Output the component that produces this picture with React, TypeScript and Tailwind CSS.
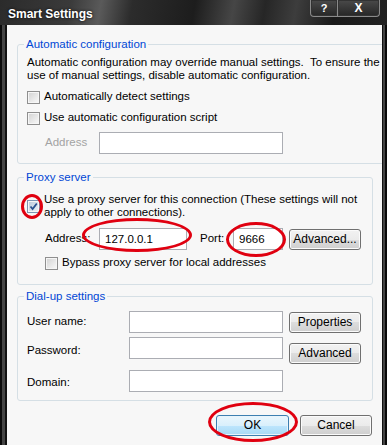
const Checkbox = ({ checked = false }: { checked?: boolean }) => (
  <span
    className={`flex h-[13px] w-[13px] shrink-0 items-center justify-center border shadow-[inset_0_0_0_1px_#f6f6f6] ${
      checked
        ? "border-[#7d93b3] bg-[linear-gradient(135deg,#b9c8db,#eef3f9)]"
        : "border-[#8f8f8f] bg-[linear-gradient(135deg,#d2d2d2,#fafafa)]"
    }`}
  >
    {checked && (
      <svg width="9" height="9" viewBox="0 0 9 9">
        <path d="M1.5 4.5 L3.6 7 L7.8 1.5" fill="none" stroke="#29508f" strokeWidth="1.8" />
      </svg>
    )}
  </span>
);

const Btn = ({ label, className = "" }: { label: string; className?: string }) => (
  <button
    className={`h-[21px] w-[72px] shrink-0 rounded-[3px] border border-[#707070] bg-[linear-gradient(#f2f2f2_0%,#ebebeb_50%,#dddddd_50%,#cfcfcf_100%)] text-[12px] leading-[19px] text-black shadow-[inset_0_0_0_1px_#fbfbfb] ${className}`}
  >
    {label}
  </button>
);

const Field = ({ value = "", className = "" }: { value?: string; className?: string }) => (
  <div className={`h-[22px] shrink-0 border border-[#abadb3] bg-white px-[5px] leading-[20px] ${className}`}>
    {value}
  </div>
);

const Legend = ({ text }: { text: string }) => (
  <legend className="ml-[6px] px-[2px] leading-[15px] text-[#0046d5]">{text}</legend>
);

const App = () => {
  return (
    <div className="relative h-[445px] w-[387px] overflow-hidden bg-[#1b1b1b] font-['Liberation_Sans',Arial,sans-serif] text-[11.5px] text-black">
      <div className="flex h-[25px] items-start bg-[linear-gradient(100deg,#2b2b2b_0%,#3a3a3a_18%,#5a5a5a_26%,#2c2c2c_34%,#1d1d1d_50%,#464646_60%,#262626_68%,#3d3d3d_76%,#1a1a1a_86%,#222_100%)]">
        <div className="pl-[8px] pt-[6px] text-[12px] leading-[16px] font-bold text-white [text-shadow:0_0_3px_#000]">
          Smart Settings
        </div>
        <div className="ml-auto mr-[7px] flex">
          <div className="flex h-[17px] w-[28px] items-center justify-center rounded-bl-[4px] border border-t-0 border-[#8a8a8a] bg-[linear-gradient(#4a4a4a,#262626)] text-[11px] font-bold text-white shadow-[inset_0_0_0_1px_#333]">
            ?
          </div>
          <div className="flex h-[17px] w-[42px] items-center justify-center rounded-br-[4px] border border-t-0 border-l-0 border-[#8a8a8a] bg-[linear-gradient(#4a4a4a,#262626)] text-[12px] font-bold text-white shadow-[inset_0_0_0_1px_#333]">
            X
          </div>
        </div>
      </div>

      <div className="flex h-[420px]">
        <div className="w-[7px] bg-[linear-gradient(90deg,#0a0a0a_0_2px,#444_2px_5px,#111_5px)]" />
        <div className="w-[375px] bg-[#f7f7f7] pl-[10px] pr-[9px]">
          <fieldset className="mt-[12px] rounded-[3px] border border-[#d5dfe5]">
            <Legend text="Automatic configuration" />
            <div className="pb-[9px] pl-[9px] pr-[8px]">
              <p className="mt-[4px] whitespace-nowrap leading-[13px]">
                Automatic configuration may override manual settings.&nbsp; To ensure the
                <br />
                use of manual settings, disable automatic configuration.
              </p>
              <div className="mt-[7px] flex h-[16px] items-center gap-[4px]">
                <Checkbox />
                <span>Automatically detect settings</span>
              </div>
              <div className="mt-[5px] flex h-[16px] items-center gap-[4px]">
                <Checkbox />
                <span>Use automatic configuration script</span>
              </div>
              <div className="mt-[6px] flex items-center pl-[18px]">
                <span className="w-[54px] text-[#a3a3a3]">Address</span>
                <Field className="w-[184px] border-[#a0a0a0]" />
              </div>
            </div>
          </fieldset>

          <fieldset className="mt-[6px] rounded-[3px] border border-[#d5dfe5]">
            <Legend text="Proxy server" />
            <div className="pb-[13px] pl-[9px] pr-[8px]">
              <div className="mt-[8px] flex items-start gap-[4px]">
                <span className="mt-[7px]">
                  <Checkbox checked />
                </span>
                <p className="whitespace-nowrap leading-[13px]">
                  Use a proxy server for this connection (These settings will not
                  <br />
                  apply to other connections).
                </p>
              </div>
              <div className="mt-[9px] flex items-center pl-[18px]">
                <span className="w-[54px]">Address:</span>
                <Field value="127.0.0.1" className="w-[88px]" />
                <span className="ml-[13px] w-[33px]">Port:</span>
                <Field value="9666" className="w-[50px]" />
                <Btn label="Advanced..." className="ml-[6px]" />
              </div>
              <div className="mt-[5px] flex h-[16px] items-center gap-[4px] pl-[18px]">
                <Checkbox />
                <span>Bypass proxy server for local addresses</span>
              </div>
            </div>
          </fieldset>

          <fieldset className="mt-[4px] rounded-[3px] border border-[#d5dfe5]">
            <Legend text="Dial-up settings" />
            <div className="pb-[8px] pl-[9px] pr-[8px]">
              <div className="mt-[7px] flex items-center">
                <span className="w-[102px]">User name:</span>
                <Field className="w-[154px]" />
                <Btn label="Properties" className="ml-[6px]" />
              </div>
              <div className="mt-[4px] flex items-start">
                <span className="w-[102px] leading-[26px]">Password:</span>
                <Field className="w-[154px]" />
                <Btn label="Advanced" className="ml-[6px] mt-[6px]" />
              </div>
              <div className="mt-[6px] flex items-center">
                <span className="w-[102px] pt-[3px]">Domain:</span>
                <Field className="w-[154px]" />
              </div>
            </div>
          </fieldset>

          <div className="mt-[14px] flex justify-end gap-[11px] pr-[1px]">
            <button className="h-[21px] w-[73px] rounded-[3px] border border-[#3c7fb1] bg-[linear-gradient(#eaf6fd_0%,#d9f0fc_50%,#bee6fd_50%,#a7d9f5_100%)] text-[12px] leading-[19px] text-black shadow-[inset_0_0_0_1px_#e8f4fb]">
              OK
            </button>
            <Btn label="Cancel" />
          </div>
        </div>
        <div className="flex-1 bg-[linear-gradient(90deg,#111_0_1px,#444_1px_3px,#0a0a0a_3px)]" />
      </div>

      {/* red annotation marks drawn over the dialog */}
      <div className="absolute left-[21px] top-[194px] h-[25px] w-[22px] rounded-[50%] border-[3px] border-[#e00010]" />
      <div className="absolute left-[82px] top-[218px] h-[34px] w-[110px] rounded-[50%] border-[3px] border-[#e00010]" />
      <div className="absolute left-[226px] top-[222px] h-[35px] w-[60px] rounded-[50%] border-[3px] border-[#e00010]" />
      <div className="absolute left-[208px] top-[402px] h-[40px] w-[90px] rounded-[50%] border-[3px] border-[#e00010]" />
    </div>
  );
};

export default App;
